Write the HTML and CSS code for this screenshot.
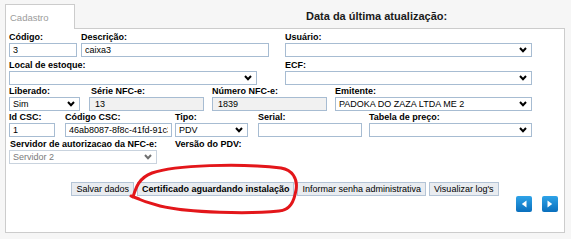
FILE: index.html
```html
<!DOCTYPE html>
<html lang="pt-BR">
<head>
    <meta charset="UTF-8">
    <title>Cadastro de PDV</title>
    <link rel="stylesheet" href="styles.css">
</head>
<body>
    <!-- Tabs + last update title -->
    <div class="tabbar">
        <div class="tab">Cadastro</div>
        <div class="tabfill">
            <h2 class="upd-title">Data da última atualização:</h2>
        </div>
    </div>

    <div class="panel">
        <div class="row r1">
            <div class="field f-codigo">
                <label>Código:</label>
                <input class="inp" type="text" value="3">
            </div>
            <div class="field f-desc">
                <label>Descrição:</label>
                <input class="inp" type="text" value="caixa3">
            </div>
            <div class="field f-usuario">
                <label>Usuário:</label>
                <div class="sel">
                    <select><option></option></select>
                    <svg class="chev" width="8" height="6" viewBox="0 0 8 6"><path d="M1 1 L4 4.2 L7 1" /></svg>
                </div>
            </div>
        </div>

        <div class="row r2">
            <div class="field f-local">
                <label>Local de estoque:</label>
                <div class="sel">
                    <select><option></option></select>
                    <svg class="chev" width="8" height="6" viewBox="0 0 8 6"><path d="M1 1 L4 4.2 L7 1" /></svg>
                </div>
            </div>
            <div class="field f-ecf">
                <label>ECF:</label>
                <div class="sel">
                    <select><option></option></select>
                    <svg class="chev" width="8" height="6" viewBox="0 0 8 6"><path d="M1 1 L4 4.2 L7 1" /></svg>
                </div>
            </div>
        </div>

        <div class="row r3">
            <div class="field f-lib">
                <label>Liberado:</label>
                <div class="sel">
                    <select><option>Sim</option><option>Não</option></select>
                    <svg class="chev" width="8" height="6" viewBox="0 0 8 6"><path d="M1 1 L4 4.2 L7 1" /></svg>
                </div>
            </div>
            <div class="field f-serie">
                <label>Série NFC-e:</label>
                <input class="inp ro" type="text" value="13" readonly>
            </div>
            <div class="field f-num">
                <label>Número NFC-e:</label>
                <input class="inp ro" type="text" value="1839" readonly>
            </div>
            <div class="field f-emit">
                <label>Emitente:</label>
                <div class="sel">
                    <select><option>PADOKA DO ZAZA LTDA ME 2</option></select>
                    <svg class="chev" width="8" height="6" viewBox="0 0 8 6"><path d="M1 1 L4 4.2 L7 1" /></svg>
                </div>
            </div>
        </div>

        <div class="row r4">
            <div class="field f-idcsc">
                <label>Id CSC:</label>
                <input class="inp" type="text" value="1">
            </div>
            <div class="field f-csc">
                <label>Código CSC:</label>
                <input class="inp" type="text" value="46ab8087-8f8c-41fd-91c3-7a2e5b0d14c9">
            </div>
            <div class="field f-tipo">
                <label>Tipo:</label>
                <div class="sel">
                    <select><option>PDV</option></select>
                    <svg class="chev" width="8" height="6" viewBox="0 0 8 6"><path d="M1 1 L4 4.2 L7 1" /></svg>
                </div>
            </div>
            <div class="field f-serial">
                <label>Serial:</label>
                <input class="inp" type="text" value="">
            </div>
            <div class="field f-tabela">
                <label>Tabela de preço:</label>
                <div class="sel">
                    <select><option></option></select>
                    <svg class="chev" width="8" height="6" viewBox="0 0 8 6"><path d="M1 1 L4 4.2 L7 1" /></svg>
                </div>
            </div>
        </div>

        <div class="row r5">
            <div class="field f-serv">
                <label>Servidor de autorizacao da NFC-e:</label>
                <div class="sel disabled">
                    <select disabled><option>Servidor 2</option></select>
                    <svg class="chev" width="8" height="6" viewBox="0 0 8 6"><path d="M1 1 L4 4.2 L7 1" /></svg>
                </div>
            </div>
            <div class="field f-versao">
                <label>Versão do PDV:</label>
            </div>
        </div>

        <!-- Action buttons -->
        <div class="actions">
            <button class="btn">Salvar dados</button>
            <button class="btn btn-strong">Certificado aguardando instalação</button>
            <button class="btn">Informar senha administrativa</button>
            <button class="btn">Visualizar log's</button>
        </div>

        <div class="pager">
            <button class="nav"><svg width="6" height="8" viewBox="0 0 6 8"><path d="M5.5 0.5 L0.8 4 L5.5 7.5 Z" /></svg></button>
            <button class="nav"><svg width="6" height="8" viewBox="0 0 6 8"><path d="M0.5 0.5 L5.2 4 L0.5 7.5 Z" /></svg></button>
        </div>
    </div>

    <!-- hand drawn highlight over the certificate button -->
    <svg class="scribble" width="571" height="239" viewBox="0 0 571 239">
        <path d="M133 197 C136 187 139 178 152 173 C175 165 240 163 281 168 C292 170 298 178 296 190 C294 202 290 210 279 211 C250 214 190 213 160 206 C148 203 140 200 131 196 L139 199" />
    </svg>
</body>
</html>
```

FILE: styles.css
```css
body {
    margin: 0;
    padding: 4px 6px 0 5px;
    background-color: #f6f6f6;
    font-family: "Liberation Sans", Arial, sans-serif;
    font-size: 9px;
    color: #000;
    position: relative;
    height: 239px;
    box-sizing: border-box;
    overflow: hidden;
}

/* tabs */
.tabbar {
    display: flex;
    height: 25px;
}

.tab {
    width: 70px;
    box-sizing: border-box;
    background-color: #fff;
    border: 1px solid #cccccc;
    border-bottom: none;
    color: #9b9b9b;
    font-size: 9.5px;
    padding: 7px 0 0 4px;
}

.tabfill {
    flex: 1;
    border-bottom: 1px solid #cccccc;
}

.upd-title {
    margin: 0;
    padding: 6px 0 0 231px;
    font-size: 11px;
    line-height: 13px;
    font-weight: bold;
    color: #1a1a1a;
}

/* main panel */
.panel {
    height: 204px;
    box-sizing: border-box;
    background-color: #fff;
    border: 1px solid #cccccc;
    border-top: none;
    padding: 2px 3px 0 3px;
}

.row {
    display: flex;
    align-items: flex-start;
}

.r2 { margin-top: 2px; }
.r5 { margin-top: 1px; }

.field label {
    display: block;
    font-weight: bold;
    line-height: 12px;
    height: 12px;
    white-space: nowrap;
}

.inp, .sel select {
    display: block;
    width: 100%;
    height: 14px;
    box-sizing: border-box;
    margin: 0;
    padding: 0 3px;
    border: 1px solid #a7bcd2;
    background-color: #fff;
    font-family: "Liberation Sans", Arial, sans-serif;
    font-size: 9px;
    color: #000;
    outline: none;
    border-radius: 0;
}

.inp.ro {
    background-color: #f1f1f1;
    color: #000;
    padding-left: 5px;
}

.sel {
    position: relative;
}

.sel select {
    appearance: none;
    -webkit-appearance: none;
    line-height: 12px;
    padding: 0 16px 0 3px;
}

.chev {
    position: absolute;
    right: 5px;
    top: 4px;
}

.chev path {
    fill: none;
    stroke: #000;
    stroke-width: 2;
}

.sel.disabled select,
.sel select:disabled {
    color: #7a7a7a;
    border-color: #c9d3de;
    background-color: #fff;
    opacity: 1;
}

.sel.disabled .chev path {
    stroke: #6f6f6f;
}

/* field widths */
.f-codigo { width: 68px; }
.f-desc { width: 188px; margin-left: 4px; }
.f-usuario { width: 247px; margin-left: 16px; }

.f-local { width: 248px; }
.f-ecf { width: 247px; margin-left: 28px; }

.f-lib { width: 71px; }
.f-serie { width: 115px; margin-left: 9px; }
.f-serie label { padding-left: 2px; }
.f-num { width: 115px; margin-left: 8px; }
.f-emit { width: 197px; margin-left: 8px; }

.f-idcsc { width: 46px; }
.f-csc { width: 107px; margin-left: 10px; }
.f-tipo { width: 73px; margin-left: 3px; }
.f-serial { width: 104px; margin-left: 10px; }
.f-tabela { width: 163px; margin-left: 7px; }

.f-serv { width: 148px; }
.f-serv label { padding-left: 1px; }
.f-versao { margin-left: 18px; }

/* buttons */
.actions {
    display: flex;
    justify-content: center;
    gap: 3px;
    margin-top: 18px;
}

.btn {
    height: 14px;
    margin: 0;
    padding: 0 4px;
    border: 1px solid #b4c4d6;
    background-color: #e9ecf0;
    font-family: "Liberation Sans", Arial, sans-serif;
    font-size: 9px;
    line-height: 12px;
    color: #000;
    border-radius: 0;
    cursor: pointer;
}

.btn-strong {
    font-weight: bold;
}

.pager {
    display: flex;
    justify-content: flex-end;
    gap: 10px;
    padding-right: 3px;
}

.nav {
    width: 16px;
    height: 16px;
    padding: 0;
    border: none;
    border-radius: 2px;
    background: linear-gradient(#2ea3e8, #0a6fbd);
    display: flex;
    align-items: center;
    justify-content: center;
}

.nav path {
    fill: #fff;
}

.scribble {
    position: absolute;
    left: 0;
    top: 0;
    pointer-events: none;
}

.scribble path {
    fill: none;
    stroke: #e3161a;
    stroke-width: 3;
    stroke-linecap: round;
    stroke-linejoin: round;
}
```
